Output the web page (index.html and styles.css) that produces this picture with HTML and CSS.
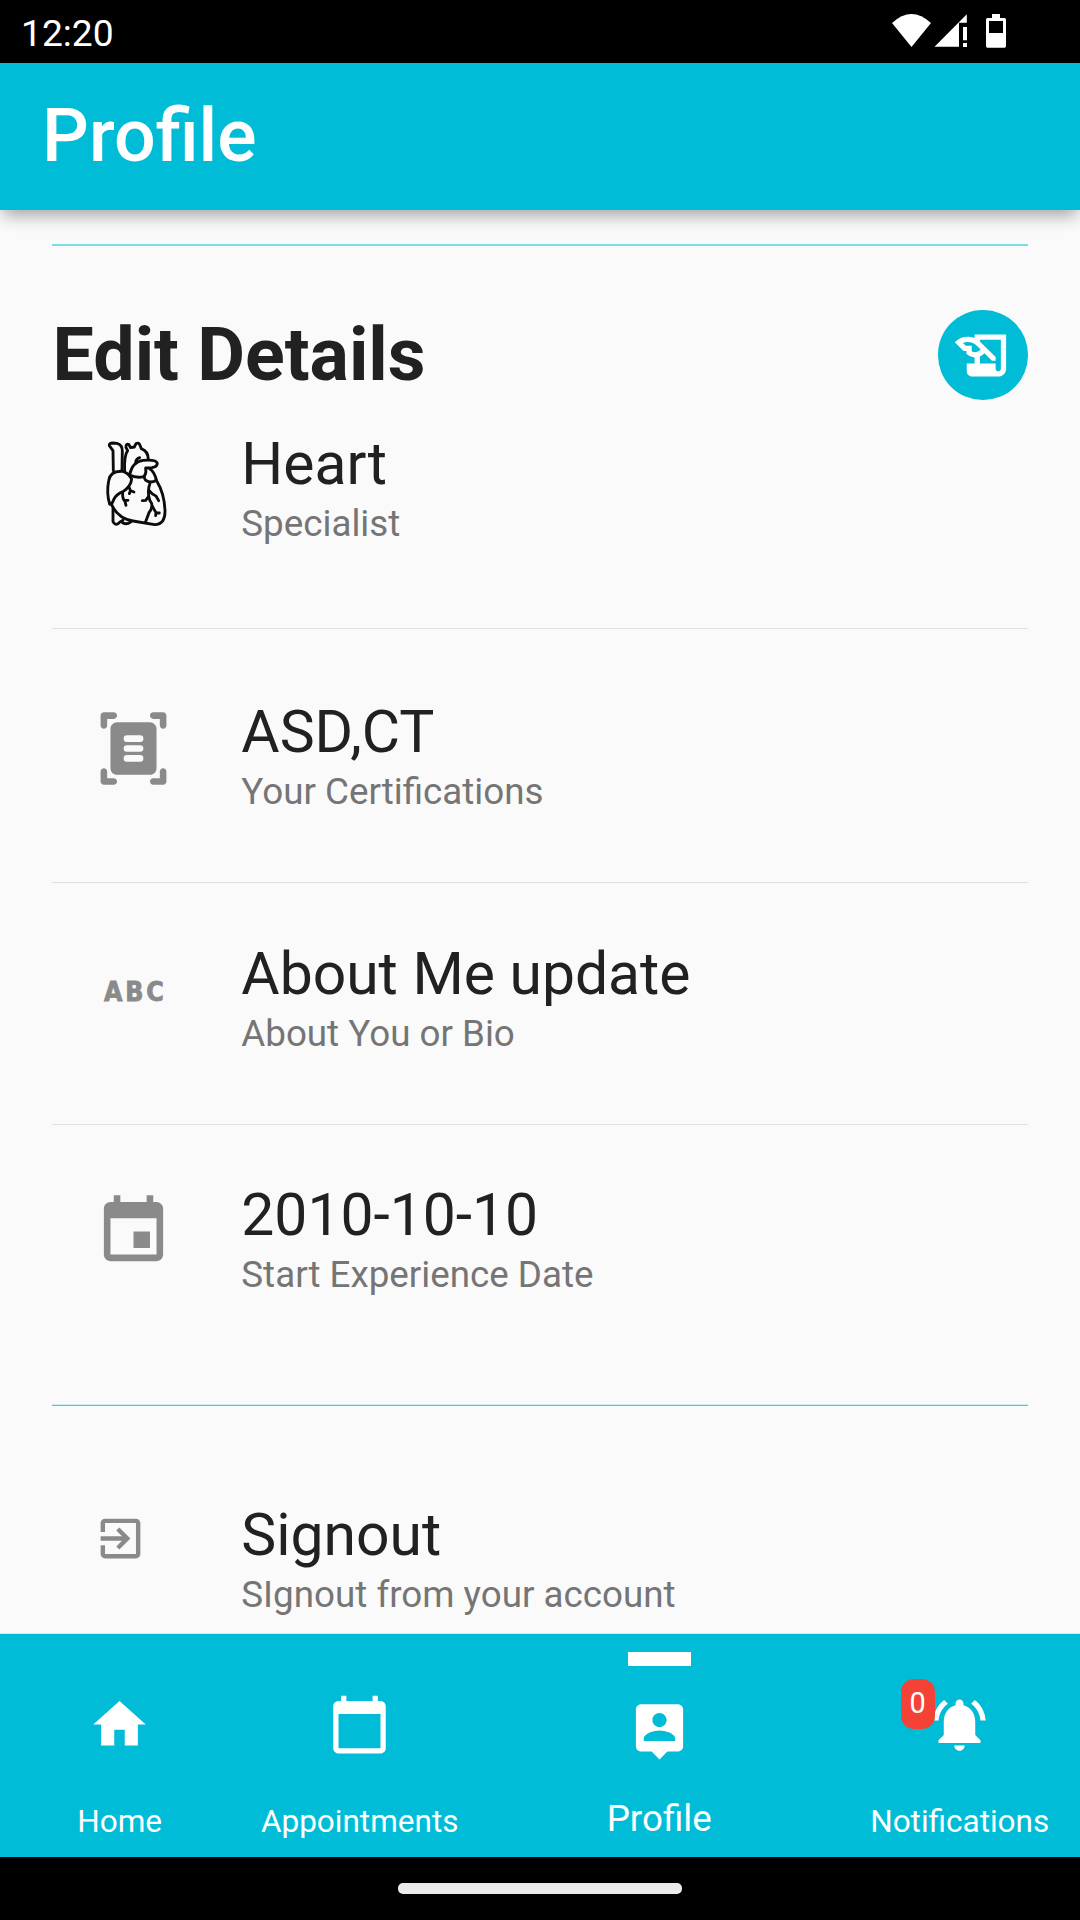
FILE: index.html
```html
<!DOCTYPE html>
<html lang="en">
<head>
<meta charset="utf-8">
<title>Profile</title>
<link rel="stylesheet" href="styles.css">
</head>
<body>
<div class="screen">
  <div class="status-bar">
    <span class="clock">12:20</span>
    <svg class="status-icons" viewBox="0 0 120 40" width="120" height="40" fill="#fff">
      <path d="M2 13Q21.500-5 41 13L21.500 37z"/>
      <path d="M44.500 36.700L76.800 4.300V12.700H69V36.700z"/>
      <path d="M73 17h4v13.300h-4zM73 33h4v4h-4z"/>
      <path fill-rule="evenodd" d="M102 4h8v4h4.500q1.500 0 1.500 1.500V36q0 1.700-1.500 1.700H97.500Q96 37.700 96 36V9.500Q96 8 97.500 8H102zM99 11v12h14V11z"/>
    </svg>
  </div>
  <header class="app-bar"><h1 class="app-title">Profile</h1></header>

  <main class="content">
    <hr class="rule rule-top">
    <div class="section-head">
      <h2 class="section-title">Edit Details</h2>
      <button class="edit-button" aria-label="Edit">
        <svg class="icon-nav" viewBox="0 0 24 24"><path d="M9 4v1.380c-.83-.33-1.720-.5-2.610-.5-1.790 0-3.580.68-4.950 2.050l3.330 3.330h1.110v1.110c.86.86 1.980 1.310 3.110 1.360V15H6v3c0 1.100.9 2 2 2h10c1.660 0 3-1.340 3-3V4H9zm-1.110 6.410V8.260H5.610L4.570 7.220a5.070 5.070 0 0 1 1.820-.34c1.340 0 2.590.52 3.540 1.460l1.410 1.410-.2.2a2.700 2.700 0 0 1-1.920.8c-.47 0-.93-.12-1.330-.34zM19 17c0 .55-.45 1-1 1s-1-.45-1-1v-2h-6v-2.590c.57-.23 1.100-.57 1.560-1.030l.2-.2L15.590 14H17v-1.410l-6-5.970V6h8v11z"/></svg>
      </button>
    </div>

    <div class="row row-heart">
      <div class="row-icon">
        <svg class="heart" viewBox="13 0 253 330" fill="none" stroke="#0c0c0c" stroke-width="8.500" stroke-linecap="round" stroke-linejoin="round">
          <path d="M71 122L70 62L59 47Q57 39 70 39L82 40Q98 44 98 62L97 122"/>
          <path d="M105 122Q103 76 114 62L109 52Q108 41 117 43L123 53L134 51L139 41Q148 35 152 48L155 56Q176 64 176 88"/>
          <path d="M138 97Q140 85 150 83"/>
          <path d="M120 133Q129 95 160 91Q201 88 203 100Q203 111 187 113L168 114Q171 128 164 139Q142 146 120 135"/>
          <path d="M124 144Q116 129 100 124Q62 121 57 152Q50 190 60 222Q66 226 72 209Q80 192 100 185Q125 168 126 146"/>
          <path d="M66 224Q84 265 130 273L195 284Q228 283 226 240Q224 190 201 152Q194 124 180 116"/>
          <path d="M164 141Q164 153 181 156Q195 156 199 150M182 157Q171 185 181 212Q194 228 178 248L168 275"/>
          <path d="M70 235L70 275Q79 291 92 275L100 271M96 276Q108 287 123 276"/>
          <path d="M119 173L122 182L133 186M122 183L119 191M99 190Q98 206 106 214L109 226M105 211L115 211"/>
          <path d="M178 181Q188 194 199 198L207 212M177 199L168 211L158 212M188 229L199 248L198 257M199 249L209 249"/>
        </svg>
      </div>
      <div class="row-text"><div class="row-title">Heart</div><div class="row-sub">Specialist</div></div>
    </div>
    <hr class="divider">
    <div class="row row-cert">
      <div class="row-icon">
        <svg class="icon-lg" viewBox="0 0 24 24">
          <path d="M7 2c0 .55-.45 1-1 1H4v2c0 .55-.45 1-1 1s-1-.45-1-1V2c0-.55.45-1 1-1h3c.55 0 1 .45 1 1zM17 2c0 .55.45 1 1 1h2v2c0 .55.45 1 1 1s1-.45 1-1V2c0-.55-.45-1-1-1h-3c-.55 0-1 .45-1 1zM7 22c0-.55-.45-1-1-1H4v-2c0-.55-.45-1-1-1s-1 .45-1 1v3c0 .55.45 1 1 1h3c.55 0 1-.45 1-1zM17 22c0-.55.45-1 1-1h2v-2c0-.55.45-1 1-1s1 .45 1 1v3c0 .55-.45 1-1 1h-3c-.55 0-1-.45-1-1z"/>
          <path fill-rule="evenodd" d="M7 4h10c1.100 0 2 .9 2 2v12c0 1.100-.9 2-2 2H7c-1.100 0-2-.9-2-2V6c0-1.100.9-2 2-2zM10 8a1 1 0 0 0 0 2h4a1 1 0 0 0 0-2zM10 11a1 1 0 0 0 0 2h4a1 1 0 0 0 0-2zM10 14a1 1 0 0 0 0 2h4a1 1 0 0 0 0-2z"/>
        </svg>
      </div>
      <div class="row-text"><div class="row-title">ASD,CT</div><div class="row-sub">Your Certifications</div></div>
    </div>
    <hr class="divider">
    <div class="row row-about">
      <div class="row-icon"><span class="abc">ABC</span></div>
      <div class="row-text"><div class="row-title">About Me update</div><div class="row-sub">About You or Bio</div></div>
    </div>
    <hr class="divider">
    <div class="row row-date">
      <div class="row-icon">
        <svg class="icon-lg" viewBox="0 0 24 24"><path d="M17 12h-5v5h5v-5zM16 1v2H8V1H6v2H5c-1.110 0-2 .9-2 2v14c0 1.100.89 2 2 2h14c1.100 0 2-.9 2-2V5c0-1.100-.9-2-2-2h-1V1h-2zm3 18H5V8h14v11z"/></svg>
      </div>
      <div class="row-text"><div class="row-title">2010-10-10</div><div class="row-sub">Start Experience Date</div></div>
    </div>
    <hr class="rule rule-bottom">
    <div class="row row-signout">
      <div class="row-icon">
        <svg class="icon-sm" viewBox="0 0 24 24"><path d="M10.090 15.590L11.500 17l5-5-5-5-1.410 1.410L12.670 11H3v2h9.670l-2.580 2.590zM19 3H5c-1.110 0-2 .9-2 2v4h2V5h14v14H5v-4H3v4c0 1.100.89 2 2 2h14c1.100 0 2-.9 2-2V5c0-1.100-.9-2-2-2z"/></svg>
      </div>
      <div class="row-text"><div class="row-title">Signout</div><div class="row-sub">SIgnout from your account</div></div>
    </div>
  </main>

  <nav class="bottom-nav">
    <a class="tab">
      <svg class="icon-nav" viewBox="0 0 24 24"><path d="M10 20v-6h4v6h5v-8h3L12 3 2 12h3v8z"/></svg>
      <span class="tab-label">Home</span>
    </a>
    <a class="tab">
      <svg class="icon-nav" viewBox="0 0 24 24"><path d="M20 3h-1V1h-2v2H7V1H5v2H4c-1.100 0-2 .9-2 2v16c0 1.100.9 2 2 2h16c1.100 0 2-.9 2-2V5c0-1.100-.9-2-2-2zm0 18H4V8h16v13z"/></svg>
      <span class="tab-label">Appointments</span>
    </a>
    <a class="tab tab-active">
      <span class="indicator"></span>
      <svg class="icon-nav" viewBox="0 0 24 24"><path d="M19 2H5c-1.110 0-2 .9-2 2v14c0 1.100.89 2 2 2h4l3 3 3-3h4c1.100 0 2-.9 2-2V4c0-1.100-.9-2-2-2zm-7 3.300c1.490 0 2.700 1.210 2.700 2.700 0 1.490-1.210 2.700-2.700 2.700-1.490 0-2.700-1.210-2.700-2.700 0-1.490 1.210-2.700 2.700-2.700zM18 16H6v-.9c0-2 4-3.100 6-3.100s6 1.100 6 3.100v.9z"/></svg>
      <span class="tab-label">Profile</span>
    </a>
    <a class="tab">
      <span class="bell">
        <svg class="icon-nav" viewBox="0 0 24 24"><path d="M7.580 4.080L6.150 2.650C3.750 4.480 2.170 7.300 2.030 10.500h2c.15-2.650 1.510-4.970 3.550-6.420zm12.390 6.420h2c-.15-3.200-1.730-6.020-4.120-7.850l-1.420 1.430c2.020 1.450 3.390 3.770 3.540 6.420zM18 11c0-3.070-1.640-5.640-4.500-6.320V4c0-.83-.67-1.500-1.500-1.500s-1.500.67-1.500 1.500v.68C7.630 5.360 6 7.920 6 11v5l-2 2v1h16v-1l-2-2v-5zm-6 11c.14 0 .27-.01.4-.04.65-.14 1.180-.58 1.440-1.180.1-.24.15-.5.15-.78h-4c.01 1.100.9 2 2.010 2z"/></svg>
        <span class="badge">0</span>
      </span>
      <span class="tab-label">Notifications</span>
    </a>
  </nav>
  <div class="gesture-bar"><span class="gesture-pill"></span></div>
</div>
</body>
</html>
```
FILE: styles.css
```css
* { box-sizing: border-box; margin: 0; padding: 0; }
body { font-family: Roboto, sans-serif; color: #212121; background: #fafafa; }
.screen { display: flex; flex-direction: column; width: 1080px; height: 1920px; overflow: hidden; }

.status-bar { display: flex; justify-content: space-between; align-items: flex-start; height: 63px; padding: 10px 70px 0 21px; background: #000; color: #fff; }
.clock { font-size: 37.200px; line-height: 43px; padding-top: 2px; }
.status-icons { display: block; }

.app-bar { position: relative; z-index: 1; display: flex; align-items: center; height: 147px; padding: 0 42px 2px; background: #00bcd6; box-shadow: 0 8px 16px -3px rgba(0, 0, 0, .36); }
.app-title { font-size: 73.500px; line-height: 86px; font-weight: 500; color: #fff; }

.content { display: flex; flex-direction: column; height: 1424px; padding: 34px 52px 0; overflow: hidden; border-bottom: 1px solid #e4e4e4; }
.content > * { flex-shrink: 0; }
hr { border: 0; }
.rule { height: 2px; background: #7ddde6; }
.rule-top { margin-bottom: 64px; }
.rule-bottom { margin: 108px 0 95px; background: linear-gradient(#c9eff3 50%, #47cbda 50%); }
.divider { height: 1px; background: #dfdfdf; }

.section-head { display: flex; justify-content: space-between; align-items: center; height: 90px; margin-bottom: 30px; padding: 0 .5px 0 .6px; }
.section-title { font-size: 73.500px; line-height: 86px; font-weight: 700; }
.edit-button { display: flex; align-items: center; justify-content: center; width: 89.250px; height: 89.250px; border: 0; border-radius: 50%; background: #00bcd6; }

.row { display: flex; height: 115px; padding-left: 42px; }
.row-icon { width: 147.300px; padding-top: 11px; fill: #8a8a8a; }
.row-heart { margin-bottom: 83px; }
.row-heart .row-icon { padding-top: 0; }
.row-cert { margin: 69px 0; }
.row-about { margin: 57px 0 69px; }
.row-date { margin-top: 56px; }
.row-title { font-size: 58.800px; line-height: 68px; white-space: nowrap; }
.row-sub { margin-top: 4px; font-size: 36.750px; line-height: 43px; color: #757575; white-space: nowrap; }
.row-icon svg { display: block; overflow: visible; }
.heart { width: 84.300px; height: 110px; }
.icon-lg { width: 79px; height: 79px; }
.icon-sm { width: 53px; height: 53px; }
.abc { display: block; padding-left: 10px; font: 700 26.500px/81px "DejaVu Sans Condensed", "DejaVu Sans", sans-serif; letter-spacing: 2.800px; color: #8a8a8a; -webkit-text-stroke: .8px #8a8a8a; }

.bottom-nav { display: grid; grid-template-columns: 240px 240px 360px 240px; height: 223px; background: #00bcd6; color: #fff; }
.tab { display: flex; flex-direction: column; align-items: center; justify-content: space-between; padding: 59px .6px 17px 0; }
.icon-nav { display: block; width: 63px; height: 63px; fill: #fff; }
.tab-label { font-size: 31.500px; line-height: 37px; }
.tab-active { padding: 18px .6px 17px 0; }
.tab-active .icon-nav { margin-bottom: 2px; }
.tab-active .tab-label { font-size: 36.750px; line-height: 43px; padding-right: 1px; }
.indicator { width: 63px; height: 14px; background: #fff; }
.bell { position: relative; }
.badge { position: absolute; left: -27px; top: -14px; width: 34px; height: 50px; border-radius: 13px; background: #f44336; font-size: 28.900px; line-height: 49px; text-align: center; padding-right: 1px; }

.gesture-bar { display: flex; justify-content: center; height: 63px; padding-top: 26px; background: #000; }
.gesture-pill { width: 284px; height: 11px; border-radius: 5px; background: #ebebeb; }
```
